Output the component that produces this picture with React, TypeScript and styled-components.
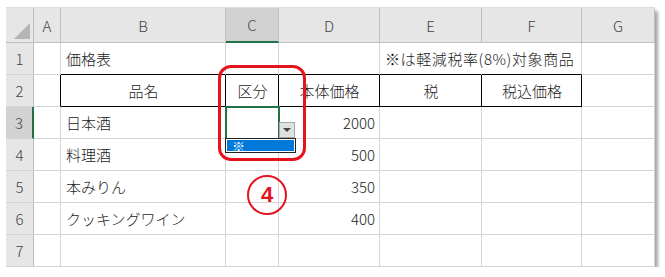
import * as React from 'react'
import styled, { createGlobalStyle } from 'styled-components'

const GridLine = '#d4d4d4'
const HeadLine = '#bfbfbf'
const ExcelGreen = '#217346'
const MarkRed = '#e3141c'

const GlobalStyle = createGlobalStyle`
    html, body {
        margin: 0;
        padding: 0;
        background: #ffffff;
    }
    body {
        font-family: "Noto Sans CJK JP", "Noto Sans", sans-serif;
    }
`

const StyledDivPage = styled.div`
    padding: 7px 0 0 6px;
`
const StyledDivSheet = styled.div`
    position: relative;
    width: 649px;
    display: grid;
    grid-template-columns: 28px 27px 165px 53px 101px 102px 100px 73px;
    grid-template-rows: 35px repeat(7, 32px);
    background: #ffffff;
    box-shadow: 3px 4px 3px rgba(0, 0, 0, 0.35);
    border-top: 1px solid #dcdcdc;
    box-sizing: border-box;
`
const StyledDivCorner = styled.div`
    display: flex;
    justify-content: flex-end;
    align-items: flex-end;
    padding: 3px;
    background: #e6e6e6;
    border-right: 1px solid ${HeadLine};
    border-bottom: 1px solid ${HeadLine};
    box-sizing: border-box;
    &::after {
        content: '';
        width: 0;
        height: 0;
        border-left: 16px solid transparent;
        border-bottom: 16px solid #b5b5b5;
    }
`
const StyledDivColHead = styled.div<{ $active?: boolean }>`
    display: flex;
    justify-content: center;
    align-items: center;
    font-size: 15px;
    font-weight: 300;
    color: #444444;
    background: ${p => (p.$active ? '#d2d2d2' : '#e6e6e6')};
    border-right: 1px solid ${HeadLine};
    border-bottom: ${p => (p.$active ? `2px solid ${ExcelGreen}` : `1px solid ${HeadLine}`)};
    box-sizing: border-box;
`
const StyledDivRowHead = styled.div<{ $active?: boolean }>`
    display: flex;
    justify-content: center;
    align-items: center;
    font-size: 15px;
    font-weight: 300;
    color: #444444;
    background: ${p => (p.$active ? '#d2d2d2' : '#e6e6e6')};
    border-right: ${p => (p.$active ? `2px solid ${ExcelGreen}` : `1px solid ${HeadLine}`)};
    border-bottom: 1px solid ${GridLine};
    box-sizing: border-box;
`
type Align = 'left' | 'center' | 'right'
const justify = { left: 'flex-start', center: 'center', right: 'flex-end' }

const StyledDivCell = styled.div<{ $align: Align, $rightDark?: boolean, $bottomDark?: boolean, $noRight?: boolean, $active?: boolean }>`
    display: flex;
    align-items: center;
    justify-content: ${p => justify[p.$align]};
    padding: 0 4px 0 5px;
    font-size: 15px;
    font-weight: 300;
    letter-spacing: ${p => (p.$noRight ? '0.6px' : '0')};
    color: #222222;
    white-space: nowrap;
    overflow: visible;
    border-right: 1px solid ${p => (p.$rightDark ? '#000000' : p.$noRight ? 'transparent' : GridLine)};
    border-bottom: 1px solid ${p => (p.$bottomDark ? '#000000' : GridLine)};
    box-sizing: border-box;
    position: relative;
    z-index: ${p => (p.$active ? 3 : p.$noRight ? 1 : 0)};
    outline: ${p => (p.$active ? `2px solid ${ExcelGreen}` : 'none')};
    outline-offset: -1px;
`

// in-cell dropdown of the active cell (lies over the cells below)
const StyledDivDropBtn = styled.div`
    position: absolute;
    left: calc(100% + 1px);
    bottom: 0;
    width: 16px;
    height: 16px;
    background: #e1e1e1;
    border: 1px solid #a9a9a9;
    box-sizing: border-box;
    display: flex;
    justify-content: center;
    align-items: center;
    &::after {
        content: '';
        width: 0;
        height: 0;
        border-left: 4px solid transparent;
        border-right: 4px solid transparent;
        border-top: 4px solid #444444;
    }
`
const StyledDivDropList = styled.div`
    position: absolute;
    left: -1px;
    top: 100%;
    width: 71px;
    height: 15px;
    border: 1px solid #222222;
    padding: 1px;
    background: #ffffff;
    box-sizing: border-box;
`
const StyledDivDropItem = styled.div`
    height: 100%;
    background: #0078d7;
    color: #ffffff;
    font-size: 13px;
    line-height: 11px;
    padding-left: 5px;
`

// red annotation marks drawn over the sheet
const StyledDivRedFrame = styled.div`
    position: absolute;
    left: 212px;
    top: 57px;
    width: 88px;
    height: 96px;
    border: 3px solid ${MarkRed};
    border-radius: 13px;
    box-sizing: border-box;
    z-index: 4;
`
const StyledDivBadge = styled.div`
    position: absolute;
    left: 241px;
    top: 167px;
    width: 40px;
    height: 40px;
    border: 2.5px solid ${MarkRed};
    border-radius: 50%;
    box-sizing: border-box;
    display: flex;
    justify-content: center;
    align-items: center;
    color: ${MarkRed};
    font-family: "Liberation Sans", Arial, sans-serif;
    font-weight: bold;
    font-size: 22px;
    z-index: 4;
`

interface ICell {
    text?: string,
    align?: Align,
    rightDark?: boolean,
    bottomDark?: boolean,
    noRight?: boolean,
    active?: boolean,
}

const columns = ['A', 'B', 'C', 'D', 'E', 'F', 'G']
const boxTop = { bottomDark: true }
const boxed = (text: string): ICell => ({ text, align: 'center', rightDark: true, bottomDark: true })

const rows: ICell[][] = [
    [{}, { text: '価格表', ...boxTop }, boxTop, boxTop, { text: '※は軽減税率(8%)対象商品', noRight: true, ...boxTop }, boxTop, {}],
    [{ rightDark: true }, boxed('品名'), boxed('区分'), boxed('本体価格'), boxed('税'), boxed('税込価格'), {}],
    [{}, { text: '日本酒' }, { active: true }, { text: '2000', align: 'right' }, {}, {}, {}],
    [{}, { text: '料理酒' }, {}, { text: '500', align: 'right' }, {}, {}, {}],
    [{}, { text: '本みりん' }, {}, { text: '350', align: 'right' }, {}, {}, {}],
    [{}, { text: 'クッキングワイン' }, {}, { text: '400', align: 'right' }, {}, {}, {}],
    [{}, {}, {}, {}, {}, {}, {}],
]

export default function App() {
    return (
        <StyledDivPage>
            <GlobalStyle />
            <StyledDivSheet>
                <StyledDivCorner />
                {columns.map(c => <StyledDivColHead key={c} $active={c == 'C'}>{c}</StyledDivColHead>)}
                {rows.map((row, r) => (
                    <React.Fragment key={r}>
                        <StyledDivRowHead $active={r == 2}>{r + 1}</StyledDivRowHead>
                        {row.map((cell, i) => (
                            <StyledDivCell
                                key={i}
                                $align={cell.align || 'left'}
                                $rightDark={cell.rightDark}
                                $bottomDark={cell.bottomDark}
                                $noRight={cell.noRight}
                                $active={cell.active}
                            >
                                {cell.text}
                                {cell.active ? (
                                    <>
                                        <StyledDivDropList><StyledDivDropItem>※</StyledDivDropItem></StyledDivDropList>
                                        <StyledDivDropBtn />
                                    </>
                                ) : null}
                            </StyledDivCell>
                        ))}
                    </React.Fragment>
                ))}

                <StyledDivRedFrame />
                <StyledDivBadge>4</StyledDivBadge>
            </StyledDivSheet>
        </StyledDivPage>
    )
}
